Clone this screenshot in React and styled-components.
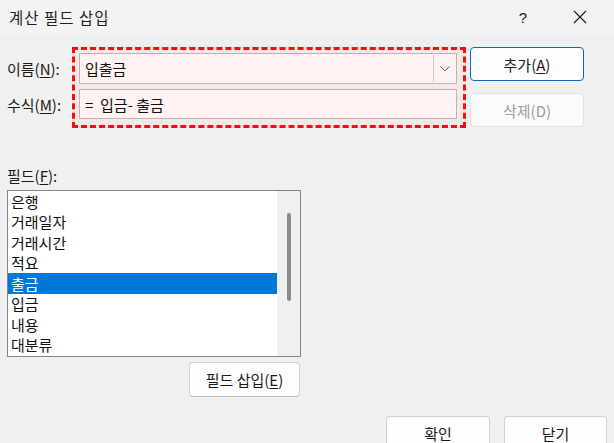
import React from "react";
import styled, { createGlobalStyle } from "styled-components";

const Global = createGlobalStyle`
  html, body { margin: 0; padding: 0; }
  body {
    background: #f0f0f0;
    font-family: "Noto Sans CJK KR", "Noto Sans", "Liberation Sans", sans-serif;
    color: #1a1a1a;
  }
  * { box-sizing: border-box; }
`;

const Window = styled.div`
  width: 614px;
  height: 443px;
  background: #f0f0f0;
  display: flex;
  flex-direction: column;
  overflow: hidden;
  font-size: 15px;
`;

const TitleBar = styled.div`
  height: 34px;
  flex: none;
  background: #f3f3f3;
  display: flex;
  align-items: center;
  padding-left: 9px;
`;

const Title = styled.div`
  flex: 1;
  font-size: 15.5px;
  color: #1f1f1f;
  letter-spacing: 1px;
`;

const TitleButton = styled.div`
  width: ${(p) => p.$w}px;
  height: 34px;
  display: flex;
  align-items: center;
  justify-content: center;
  font-family: "Liberation Sans", sans-serif;
  font-size: 15px;
  color: #1f1f1f;
`;

const TopRow = styled.div`
  display: flex;
  margin-top: 13px;
  padding-left: 7px;
`;

const LabelColumn = styled.div`
  width: 65px;
  display: flex;
  flex-direction: column;
  padding-top: 6px;
  gap: 5px;
`;

const Label = styled.div`
  height: ${(p) => p.$h}px;
  display: flex;
  align-items: center;
  white-space: nowrap;
`;

const U = styled.span`
  text-decoration: underline;
  text-underline-offset: 2px;
`;

const DashedBox = styled.div`
  width: 394px;
  height: 81px;
  border: 3px dashed #f01010;
  background: #f6e8e8;
  padding: 3px 6px 6px 4px;
  display: flex;
  flex-direction: column;
  gap: 5px;
`;

const Combo = styled.div`
  height: 31px;
  border: 1px solid #c4b2b2;
  background: #fff2f2;
  display: flex;
  align-items: stretch;
`;

const FieldText = styled.div`
  flex: 1;
  display: flex;
  align-items: center;
  padding-left: 5px;
  font-size: 15px;
  color: #111;
  white-space: pre;
`;

const DropButton = styled.div`
  width: 22px;
  margin: 1px 1px 1px 0;
  border-left: 1px solid #d4c4c4;
  background: #fdf3f3;
  display: flex;
  align-items: center;
  justify-content: center;
`;

const Input = styled.div`
  height: 30px;
  border: 1px solid #c4b2b2;
  background: #fff2f2;
  display: flex;
`;

const ButtonColumn = styled.div`
  margin-left: 4px;
  display: flex;
  flex-direction: column;
  gap: 12px;
`;

const Button = styled.div`
  width: ${(p) => p.$w}px;
  height: ${(p) => p.$h || 34}px;
  border: 1px solid ${(p) => (p.$primary ? "#0a67c2" : p.$disabled ? "#e2e2e2" : "#d2d2d2")};
  border-bottom-color: ${(p) => (p.$primary ? "#0a67c2" : p.$disabled ? "#e2e2e2" : "#bdbdbd")};
  border-radius: 4px;
  background: ${(p) => (p.$disabled ? "#fbfbfb" : "#fdfdfd")};
  color: ${(p) => (p.$disabled ? "#9d9d9d" : "#1a1a1a")};
  display: flex;
  align-items: center;
  justify-content: center;
  font-size: 15px;
  white-space: nowrap;
`;

const Separator = styled.div`
  height: 2px;
  margin: 17px 5px 0 5px;
  background: #e2e2e2;
`;

const FieldLabel = styled.div`
  margin: 21px 0 0 7px;
  height: 20px;
  line-height: 20px;
`;

const FieldSection = styled.div`
  width: 294px;
  margin: 4px 0 0 7px;
  display: flex;
  flex-direction: column;
`;

const ListBox = styled.div`
  height: 167px;
  border: 1px solid #858585;
  background: #ffffff;
  display: flex;
`;

const ListItems = styled.div`
  width: 269px;
  display: flex;
  flex-direction: column;
  overflow: hidden;
`;

const ListItem = styled.div`
  height: 20.5px;
  flex: none;
  display: flex;
  align-items: center;
  padding-left: 3px;
  font-size: 15px;
  background: ${(p) => (p.$selected ? "#0078d7" : "transparent")};
  color: ${(p) => (p.$selected ? "#ffffff" : "#111")};
`;

const ScrollTrack = styled.div`
  flex: 1;
  background: #f0f0f0;
  display: flex;
  justify-content: center;
  padding-top: 22px;
`;

const ScrollThumb = styled.div`
  width: 4px;
  height: 88px;
  border-radius: 2px;
  background: #8a8a8a;
  margin-left: 1px;
`;

const InsertRow = styled.div`
  display: flex;
  justify-content: flex-end;
  margin-top: 5px;
  padding-right: 1px;
`;

const BottomRow = styled.div`
  display: flex;
  justify-content: flex-end;
  gap: 14px;
  margin-top: 19px;
  padding-right: 7px;
`;

const fields = ["은행", "거래일자", "거래시간", "적요", "출금", "입금", "내용", "대분류"];

export default function App() {
  return (
    <>
      <Global />
      <Window>
        <TitleBar>
          <Title>계산 필드 삽입</Title>
          <TitleButton $w={46}>?</TitleButton>
          <TitleButton $w={68}>
            <svg width="14" height="14" viewBox="0 0 14 14">
              <path d="M1 1 L13 13 M13 1 L1 13" stroke="#1f1f1f" strokeWidth="1.2" fill="none" />
            </svg>
          </TitleButton>
        </TitleBar>

        <TopRow>
          <LabelColumn>
            <Label $h={31}>
              이름(<U>N</U>):
            </Label>
            <Label $h={30}>
              수식(<U>M</U>):
            </Label>
          </LabelColumn>
          <DashedBox>
            <Combo>
              <FieldText>입출금</FieldText>
              <DropButton>
                <svg width="10" height="6" viewBox="0 0 10 6">
                  <path d="M0.5 0.5 L5 5 L9.5 0.5" stroke="#606060" strokeWidth="1" fill="none" />
                </svg>
              </DropButton>
            </Combo>
            <Input>
              <FieldText>{"=  입금- 출금"}</FieldText>
            </Input>
          </DashedBox>
          <ButtonColumn>
            <Button $w={114} $primary>
              추가(<U>A</U>)
            </Button>
            <Button $w={114} $disabled>
              삭제(D)
            </Button>
          </ButtonColumn>
        </TopRow>

        <Separator />

        <FieldLabel>
          필드(<U>F</U>):
        </FieldLabel>
        <FieldSection>
          <ListBox>
            <ListItems>
              {fields.map((f) => (
                <ListItem key={f} $selected={f === "출금"}>
                  {f}
                </ListItem>
              ))}
            </ListItems>
            <ScrollTrack>
              <ScrollThumb />
            </ScrollTrack>
          </ListBox>
          <InsertRow>
            <Button $w={111} $h={35}>
              필드 삽입(<U>E</U>)
            </Button>
          </InsertRow>
        </FieldSection>

        <BottomRow>
          <Button $w={104}>확인</Button>
          <Button $w={103}>닫기</Button>
        </BottomRow>
      </Window>
    </>
  );
}
